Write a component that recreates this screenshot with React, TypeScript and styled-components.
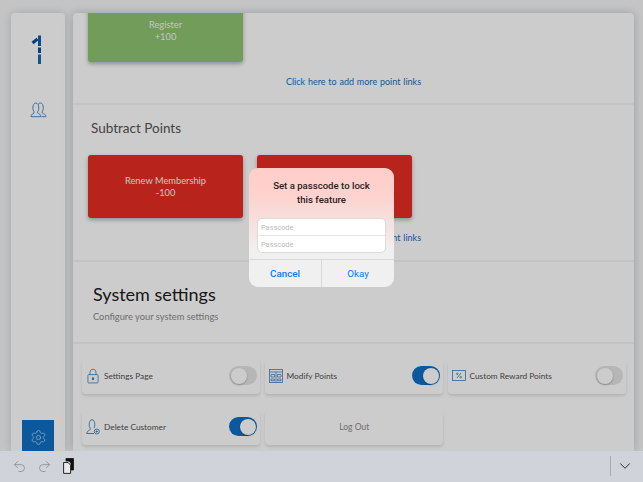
import React from "react";
import styled, { createGlobalStyle } from "styled-components";
import { ChevronDown, Redo2, Settings, Undo2 } from "lucide-react";

const GlobalStyle = createGlobalStyle`
  html, body {
    margin: 0;
    padding: 0;
    height: 100%;
    overflow: hidden;
    font-family: "Lato", "Open Sans", sans-serif;
  }
`;

const Page = styled.div`
  display: flex;
  flex-direction: column;
  width: 643px;
  height: 482px;
  overflow: hidden;
`;

const Stage = styled.div`
  position: relative;
  flex: 1;
  min-height: 0;
  display: flex;
  gap: 8px;
  padding: 13px 9px 0 11px;
  background: #f6f6f6;
  overflow: hidden;
`;

const Sidebar = styled.aside`
  width: 54px;
  flex-shrink: 0;
  display: flex;
  flex-direction: column;
  align-items: center;
  background: #ffffff;
  border-radius: 4px 4px 0 0;
  box-shadow: 0 0 8px rgba(120, 140, 150, 0.35);
  overflow: hidden;
`;

const Logo = styled.div`
  margin-top: 22px;
  height: 30px;
  display: flex;
`;

const NavIcon = styled.div`
  margin-top: 37px;
  display: flex;
  color: #3f82bd;
`;

// runs on under the toolbar, only its upper part shows
const GearButton = styled.div`
  margin-top: auto;
  margin-bottom: -4px;
  width: 32px;
  height: 35px;
  flex-shrink: 0;
  display: flex;
  align-items: center;
  justify-content: center;
  background: #0e70c3;
  color: #c2dcf0;
`;

const Panel = styled.main`
  flex: 1;
  min-width: 0;
  background: #ffffff;
  border-radius: 4px 4px 0 0;
  box-shadow: 0 0 8px rgba(120, 140, 150, 0.45);
  overflow: hidden;
`;

// the panel content sits scrolled a little past its first row
const ScrollContent = styled.div`
  margin-top: -14px;
`;

const Section = styled.section<{ $height: number }>`
  height: ${(p) => p.$height}px;
  box-sizing: border-box;
  padding: 0 15px;
  border-bottom: 2px solid #f4f4f4;
`;

const SectionTitle = styled.h2`
  margin: 0;
  padding: 13px 0 0 3px;
  height: 50px;
  box-sizing: border-box;
  font-size: 13.5px;
  line-height: 20px;
  font-weight: 400;
  color: #555;
`;

const LinkCards = styled.div`
  display: flex;
  gap: 14px;
`;

const LinkCard = styled.div<{ $color: string }>`
  width: 155px;
  height: 63px;
  display: flex;
  align-items: center;
  justify-content: center;
  text-align: center;
  border-radius: 3px;
  background: ${(p) => p.$color};
  color: #f6f6f6;
  font-size: 9.3px;
  line-height: 12px;
  box-shadow: 0 2px 4px rgba(0, 0, 0, 0.3);
`;

const MoreLink = styled.a`
  display: block;
  margin-top: 14px;
  text-align: center;
  font-size: 9px;
  line-height: 12px;
  word-spacing: 0.5px;
  color: #1b6fb3;
`;

const SystemHeader = styled.header`
  height: 82px;
  box-sizing: border-box;
  padding: 21px 20px 0;
  border-bottom: 2px solid #f4f4f4;
`;

const SystemTitle = styled.h1`
  margin: 0;
  font-size: 18px;
  line-height: 22px;
  font-weight: 400;
  color: #1c1c1c;
`;

const SystemNote = styled.p`
  margin: 6px 0 0;
  font-size: 9.3px;
  line-height: 12px;
  color: #8b8b8b;
`;

const SettingsGrid = styled.div`
  display: grid;
  grid-template-columns: 178px 178.5px 178.5px;
  grid-auto-rows: 34px;
  column-gap: 4.5px;
  row-gap: 17px;
  padding: 16px 0 0 9px;
`;

const SettingCard = styled.div`
  display: flex;
  align-items: center;
  box-sizing: border-box;
  padding: 0 3px 3px 4px;
  border-radius: 4px;
  background: #ffffff;
  box-shadow: 0 2px 3px rgba(0, 0, 0, 0.12);
`;

const LogOutCard = styled(SettingCard)`
  justify-content: center;
  font-size: 8.5px;
  color: #8a8a8a;
`;

const SettingIcon = styled.span`
  width: 14px;
  height: 18px;
  display: flex;
  align-items: center;
  justify-content: center;
  margin-right: 4px;
  color: #3f82bd;
`;

const SettingLabel = styled.span`
  flex: 1;
  font-size: 8.3px;
  color: #505050;
`;

const Toggle = styled.span<{ $on: boolean }>`
  width: 28px;
  height: 19px;
  box-sizing: border-box;
  padding: 1.5px;
  display: flex;
  justify-content: ${(p) => (p.$on ? "flex-end" : "flex-start")};
  border-radius: 10px;
  background: ${(p) => (p.$on ? "#0e70c3" : "#e4e4e4")};
`;

const ToggleKnob = styled.span`
  width: 16px;
  height: 16px;
  border-radius: 50%;
  background: #ffffff;
  box-shadow: 0 1px 2px rgba(0, 0, 0, 0.25);
`;

const Overlay = styled.div`
  position: absolute;
  inset: 0;
  display: flex;
  justify-content: center;
  align-items: flex-start;
  padding-top: 168px;
  background: rgba(0, 0, 0, 0.2);
`;

const Dialog = styled.div`
  width: 145px;
  height: 119px;
  display: flex;
  flex-direction: column;
  border-radius: 9px;
  overflow: hidden;
  background: linear-gradient(180deg, #ffcdc9 0%, #fdd2ce 22%, #f4e4e3 52%, #f0f0f0 68%);
`;

const DialogTitle = styled.h3`
  margin: 0;
  height: 50px;
  box-sizing: border-box;
  padding-top: 11px;
  text-align: center;
  font-family: "Roboto", "Liberation Sans", sans-serif;
  font-size: 9.6px;
  line-height: 13.5px;
  font-weight: 500;
  color: #2a2020;
`;

const FieldGroup = styled.div`
  display: flex;
  flex-direction: column;
  margin: 0 8px;
  height: 35px;
  box-sizing: border-box;
  border: 1px solid #dcdcdc;
  border-radius: 5px;
  background: #ffffff;
  overflow: hidden;
`;

const Field = styled.input`
  flex: 1;
  min-height: 0;
  width: 100%;
  box-sizing: border-box;
  border: 0;
  padding: 0 3px;
  background: transparent;
  font-family: "Roboto", "Liberation Sans", sans-serif;
  font-size: 7.4px;
  outline: none;
  & + & {
    border-top: 1px solid #e4e4e4;
  }
  &::placeholder {
    color: #bcbcbc;
  }
`;

const DialogActions = styled.div`
  margin-top: auto;
  height: 27px;
  display: flex;
  border-top: 1px solid #d9d9d9;
`;

const DialogButton = styled.button<{ $strong?: boolean }>`
  flex: 1;
  border: 0;
  padding: 0;
  background: transparent;
  font-family: "Roboto", "Liberation Sans", sans-serif;
  font-size: 9.8px;
  font-weight: ${(p) => (p.$strong ? 500 : 400)};
  color: #0a7aff;
  & + & {
    border-left: 1px solid #d9d9d9;
  }
`;

const Toolbar = styled.footer`
  height: 31px;
  flex-shrink: 0;
  box-sizing: border-box;
  display: flex;
  align-items: center;
  padding: 0 9px 1px 12px;
  background: #d0d3d9;
`;

const ToolButton = styled.span<{ $gap: number }>`
  display: flex;
  margin-right: ${(p) => p.$gap}px;
  color: #85878b;
`;

const ToolbarEnd = styled.div`
  margin-left: auto;
  height: 20px;
  display: flex;
  align-items: center;
  padding-left: 5px;
  border-left: 1px solid #a9abb0;
  color: #1c1c1c;
`;

const OneLogo = () => (
  <svg width="14" height="30" viewBox="0 0 14 30" fill="none">
    <path d="M1.5 8 6.500 4" stroke="#0c4ea6" strokeWidth="3" />
    <path d="M8.500 0.500V11" stroke="#0c5fb0" strokeWidth="3" />
    <path d="M8.500 12.500V18" stroke="#0c4ea6" strokeWidth="3" />
    <path d="M8.500 19.500V29" stroke="#0f6cb8" strokeWidth="3" />
  </svg>
);

const PeopleIcon = () => (
  <svg width="17" height="16" viewBox="0 0 17 16" fill="none" stroke="currentColor" strokeWidth="0.9">
    <path d="M1 14.7h9.8c.2-2.5-2-2.8-3-3.6-.4-.5-.3-1.2.1-1.8.7-1 .9-2 .9-3.2C8.800 3 7.600 1 5.800 1S2.900 3 2.900 6.100c0 1.200.2 2.200.9 3.200.4.600.5 1.300.100 1.800-1 .8-3.100 1.100-2.900 3.600Z" />
    <path d="M8.300 2.100C8.800 1.400 9.500 1 10.300 1c1.900 0 3 2 3 5.100 0 1.200-.3 2.200-.9 3.200-.4.600-.5 1.300-.1 1.800 1 .8 3.800 1.100 3.700 3.600h-4.600" />
  </svg>
);

const LockIcon = () => (
  <svg width="12" height="16" viewBox="0 0 13 16" fill="none" stroke="currentColor" strokeWidth="0.9">
    <rect x="1" y="6.500" width="11" height="9" rx="0.8" />
    <path d="M3.300 6.500V3.800C3.300 2 4.600 0.700 6.500 0.700S9.700 2 9.700 3.800V6.500" />
    <rect x="5.800" y="10" width="1.400" height="2" fill="currentColor" />
  </svg>
);

const PersonRemoveIcon = () => (
  <svg width="14" height="16" viewBox="0 0 14 16" fill="none" stroke="currentColor" strokeWidth="0.9">
    <path d="M8 14.500H.7c0-2.500 2.700-2.900 3.400-3.800.4-.5.300-1.100-.1-1.700C3.400 8 3.200 7 3.200 5.700 3.200 2.800 4.300.7 6 .7s2.800 2.100 2.800 5c0 1.300-.2 2.300-.8 3.300" />
    <circle cx="10.800" cy="12.500" r="2.500" />
    <circle cx="10.800" cy="12.500" r="0.700" fill="currentColor" />
  </svg>
);

const ModifyIcon = () => (
  <svg width="14" height="14" viewBox="0 0 14 14" fill="none" stroke="currentColor" strokeWidth="0.8">
    <rect x="0.500" y="0.500" width="13" height="13" />
    <path d="M0.500 3h13M7 3v10.500" />
    <path d="M2 5.500h3.500v2.500H2zM8.500 5.500H12v2.500H8.500zM2 10h3.500v1.800H2zM8.500 10H12v1.800H8.500z" />
  </svg>
);

const PercentIcon = () => (
  <svg width="14" height="11" viewBox="0 0 14 11" fill="none" stroke="currentColor" strokeWidth="0.8">
    <rect x="0.500" y="0.500" width="13" height="10" />
    <path d="M9 3 5 8" />
    <circle cx="5.300" cy="3.800" r="0.800" />
    <circle cx="8.700" cy="7.200" r="0.800" />
  </svg>
);

const PasteIcon = () => (
  <svg width="11" height="16" viewBox="0 0 11 16" fill="none">
    <path d="M3 0.500h7.500V12H8V5L6 3H3Z" fill="#111" stroke="#111" strokeWidth="0.8" />
    <path d="M0.600 4.500H5l2.600 2.600V15.400H0.600Z" fill="#e8e9ec" stroke="#111" strokeWidth="0.9" />
  </svg>
);

const App: React.FC = () => {
  return (
    <Page>
      <GlobalStyle />
      <Stage>
        <Sidebar>
          <Logo>
            <OneLogo />
          </Logo>
          <NavIcon>
            <PeopleIcon />
          </NavIcon>
          <GearButton>
            <Settings size={17} strokeWidth={1} />
          </GearButton>
        </Sidebar>

        <Panel>
          <ScrollContent>
            <Section $height={106}>
              <LinkCards>
                <LinkCard $color="#8ec371">
                  Register
                  <br />
                  +100
                </LinkCard>
              </LinkCards>
              <MoreLink>Click here to add more point links</MoreLink>
            </Section>

            <Section $height={157}>
              <SectionTitle>Subtract Points</SectionTitle>
              <LinkCards>
                <LinkCard $color="#e62c23">
                  Renew Membership
                  <br />
                  -100
                </LinkCard>
                <LinkCard $color="#e62c23" />
              </LinkCards>
              <MoreLink>Click here to add more point links</MoreLink>
            </Section>

            <SystemHeader>
              <SystemTitle>System settings</SystemTitle>
              <SystemNote>Configure your system settings</SystemNote>
            </SystemHeader>

            <SettingsGrid>
              <SettingCard>
                <SettingIcon>
                  <LockIcon />
                </SettingIcon>
                <SettingLabel>Settings Page</SettingLabel>
                <Toggle $on={false}>
                  <ToggleKnob />
                </Toggle>
              </SettingCard>
              <SettingCard>
                <SettingIcon>
                  <ModifyIcon />
                </SettingIcon>
                <SettingLabel>Modify Points</SettingLabel>
                <Toggle $on>
                  <ToggleKnob />
                </Toggle>
              </SettingCard>
              <SettingCard>
                <SettingIcon>
                  <PercentIcon />
                </SettingIcon>
                <SettingLabel>Custom Reward Points</SettingLabel>
                <Toggle $on={false}>
                  <ToggleKnob />
                </Toggle>
              </SettingCard>
              <SettingCard>
                <SettingIcon>
                  <PersonRemoveIcon />
                </SettingIcon>
                <SettingLabel>Delete Customer</SettingLabel>
                <Toggle $on>
                  <ToggleKnob />
                </Toggle>
              </SettingCard>
              <LogOutCard>Log Out</LogOutCard>
            </SettingsGrid>
          </ScrollContent>
        </Panel>

        <Overlay>
          <Dialog>
            <DialogTitle>
              Set a passcode to lock
              <br />
              this feature
            </DialogTitle>
            <FieldGroup>
              <Field placeholder="Passcode" />
              <Field placeholder="Passcode" />
            </FieldGroup>
            <DialogActions>
              <DialogButton $strong>Cancel</DialogButton>
              <DialogButton>Okay</DialogButton>
            </DialogActions>
          </Dialog>
        </Overlay>
      </Stage>

      <Toolbar>
        <ToolButton $gap={10}>
          <Undo2 size={15} strokeWidth={1.2} />
        </ToolButton>
        <ToolButton $gap={11}>
          <Redo2 size={15} strokeWidth={1.2} />
        </ToolButton>
        <ToolButton $gap={0}>
          <PasteIcon />
        </ToolButton>
        <ToolbarEnd>
          <ChevronDown size={18} strokeWidth={1.2} />
        </ToolbarEnd>
      </Toolbar>
    </Page>
  );
};

export default App;
